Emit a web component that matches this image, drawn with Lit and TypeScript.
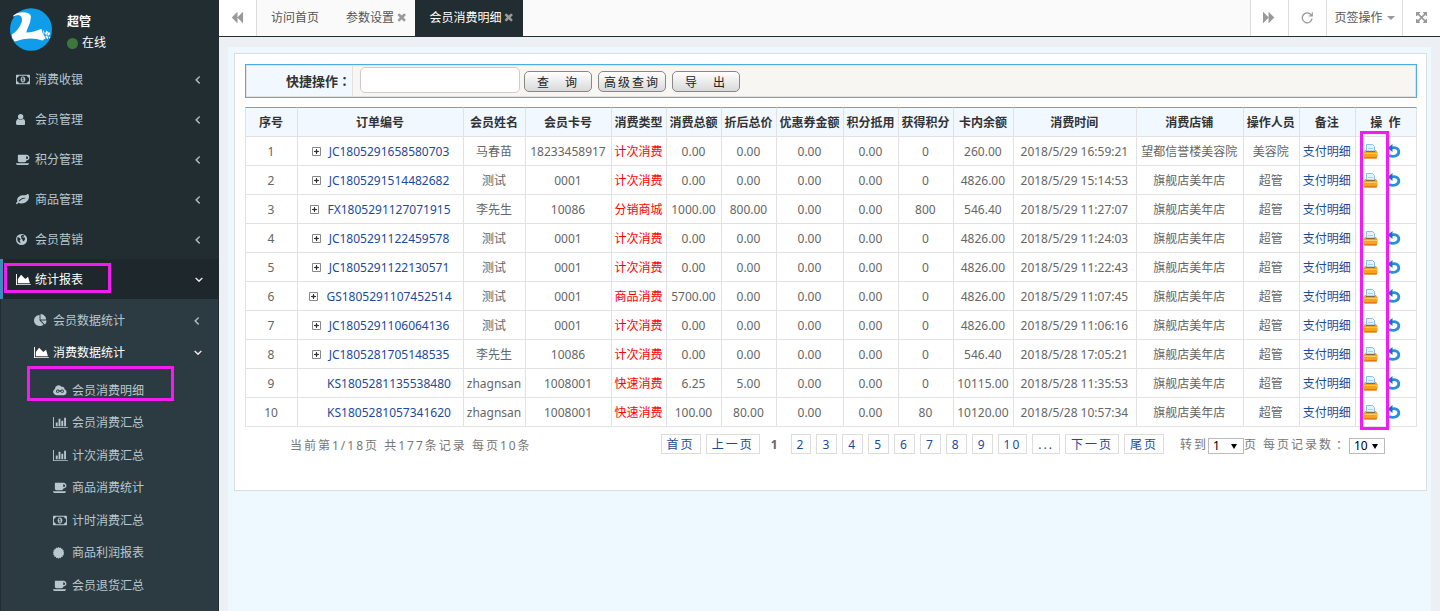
import { LitElement, html, css, svg, nothing } from "lit";
import { customElement, state } from "lit/decorators.js";
import { classMap } from "lit/directives/class-map.js";

type Glyph = { w: number; d: string };

const GLYPHS: Record<string, Glyph> = {
  money: { w: 1920, d: "M768 1152h384v-96h-128v-448h-114l-148 137 77 80q42-37 55-57h2v288h-128v96zm512-256q0 70-21 142t-59.5 134-101.5 101-138 39-138-39-101.5-101-59.5-134-21-142 21-142 59.5-134 101.5-101 138-39 138 39 101.5 101 59.5 134 21 142zm512 256v-512q-106 0-181-75t-75-181h-1152q0 106-75 181t-181 75v512q106 0 181 75t75 181h1152q0-106 75-181t181-75zm128-832v1152q0 26-19 45t-45 19h-1792q-26 0-45-19t-19-45v-1152q0-26 19-45t45-19h1792q26 0 45 19t19 45z" },
  user: { w: 1280, d: "M1280 1399q0 109-62.500 187t-150.500 78h-854q-88 0-150.500-78t-62.500-187q0-85 8.500-160.500t31.500-152 58.500-131 94-89 134.500-34.500q131 128 313 128t313-128q76 0 134.500 34.500t94 89 58.500 131 31.500 152 8.500 160.500zm-256-887q0 159-112.500 271.500t-271.500 112.500-271.500-112.500-112.500-271.500 112.500-271.500 271.500-112.500 271.500 112.500 112.500 271.500z" },
  coffee: { w: 1920, d: "M1664 640q0-80-56-136t-136-56h-64v384h64q80 0 136-56t56-136zm-1664 768h1792q0 106-75 181t-181 75h-1280q-106 0-181-75t-75-181zm1856-768q0 159-112.5 271.5t-271.5 112.5h-64v32q0 92-66 158t-158 66h-704q-92 0-158-66t-66-158v-736q0-26 19-45t45-19h1152q159 0 271.5 112.5t112.5 271.5z" },
  leaf: { w: 1792, d: "M1280 704q0-26-19-45t-45-19q-172 0-318 49.5t-259.5 134-235.5 219.5q-19 21-19 45 0 26 19 45t45 19q24 0 45-19 27-24 74-71t67-66q137-124 268.5-176t313.5-52q26 0 45-19t19-45zm512-198q0 95-20 193-46 224-184.5 383t-357.5 268q-214 108-438 108-148 0-286-47-15-5-88-42t-96-37q-16 0-39.5 32t-45 70-52.5 70-60 32q-43 0-63.5-17.5t-45.5-59.5q-2-4-6-11t-5.5-10-3-9.5-1.5-13.5q0-35 31-73.5t68-65.5 68-56 31-48q0-4-14-38t-16-44q-9-51-9-104 0-115 43.5-220t119-184.5 170.5-139 204-95.5q55-18 145-25.5t179.5-9 178.5-6 163.5-24 113.5-56.5l29.5-29.5 29.5-28 27-20 36.5-16 43.5-4.5q39 0 70.5 46t47.5 112 24 124 8 96z" },
  globe: { w: 1536, d: "M768 128a768 768 0 1 0 0 1536a768 768 0 1 0 0-1536zM800 270l180 20 150 90-60 130-130-40-90 90 110 60 190-20 90 130-20 210-170 190-130-60-30-190-160-110 20-170-90-70 60-120zM230 560l170 60 180 140 60 150-130 90 40 170 100 160-90 60-230-150-130-240-20-240z" },
  area: { w: 2048, d: "M2048 1536v128h-2048v-1536h128v1408h1920zm-384-1024l256 896h-1664v-576l448-576 576 576z" },
  bars: { w: 2048, d: "M640 896v512h-256v-512h256zm384-512v1024h-256v-1024h256zm1024 1152v128h-2048v-1536h128v1408h1920zm-640-896v768h-256v-768h256zm384-384v1152h-256v-1152h256z" },
  pie: { w: 1792, d: "M768 890l546 546q-106 108-247.5 168t-298.5 60q-209 0-385.5-103t-279.5-279.5-103-385.5 103-385.5 279.5-279.5 385.5-103v762zm187 6h773q0 157-60 298.5t-168 247.5zm709-128h-768v-768q209 0 385.5 103t279.5 279.5 103 385.5z" },
  cloud: { w: 1920, d: "M450 1536a450 450 0 0 1-190-850a510 510 0 0 1 920-290a290 290 0 0 1 400 320a420 420 0 0 1-100 820zM640 770a220 220 0 1 0 0 440c130 0 220-80 320-170c100 90 190 170 320 170a220 220 0 1 0 0-440c-130 0-220 80-320 170c-100-90-190-170-320-170zM640 890c70 0 120 40 190 100c-70 60-120 100-190 100a100 100 0 1 1 0-200zM1280 890a100 100 0 1 1 0 200c-70 0-120-40-190-100c70-60 120-100 190-100z" },
  certificate: { w: 1536, d: "M768 128l130 150 180-85 60 190 198-10-10 198 190 60-85 180 150 130-150 130 85 180-190 60 10 198-198-10-60 190-180-85-130 150-130-150-180 85-60-190-198 10 10-198-190-60 85-180-150-130 150-130-85-180 190-60-10-198 198 10 60-190 180 85z" },
  left: { w: 1024, d: "M627 544q0 13-10 23l-393 393 393 393q10 10 10 23t-10 23l-50 50q-10 10-23 10t-23-10l-466-466q-10-10-10-23t10-23l466-466q10-10 23-10t23 10l50 50q10 10 10 23z" },
  down: { w: 1152, d: "M1075 736q0 13-10 23l-466 466q-10 10-23 10t-23-10l-466-466q-10-10-10-23t10-23l50-50q10-10 23-10t23 10l393 393 393-393q10-10 23-10t23 10l50 50q10 10 10 23z" },
  times: { w: 1408, d: "M1298 1322q0 40-28 68l-136 136q-28 28-68 28t-68-28l-294-294-294 294q-28 28-68 28t-68-28l-136-136q-28-28-28-68t28-68l294-294-294-294q-28-28-28-68t28-68l136-136q28-28 68-28t68 28l294 294 294-294q28-28 68-28t68 28l136 136q28 28 28 68t-28 68l-294 294 294 294q28 28 28 68z" },
  backward: { w: 1664, d: "M1619 141q19-19 32-13t13 32v1472q0 26-13 32t-32-13l-710-710q-9-9-13-19v710q0 26-13 32t-32-13l-710-710q-19-19-19-45t19-45l710-710q19-19 32-13t13 32v710q4-10 13-19z" },
  forward: { w: 1664, d: "M45 1651q-19 19-32 13t-13-32v-1472q0-26 13-32t32 13l710 710q9 9 13 19v-710q0-26 13-32t32 13l710 710q19 19 19 45t-19 45l-710 710q-19 19-32 13t-13-32v-710q-4 10-13 19z" },
  repeat: { w: 1664, d: "M1640 160v600h-600v-150h300a590 590 0 1 0 100 440h180a770 770 0 1 1-140-570v-320z" },
  arrows: { w: 1536, d: "M1283 541l-355 355 355 355 144-144q29-31 70-14 39 17 39 59v448q0 26-19 45t-45 19h-448q-42 0-59-40-17-39 14-69l144-144-355-355-355 355 144 144q31 30 14 69-17 40-59 40h-448q-26 0-45-19t-19-45v-448q0-42 40-59 39-17 69 14l144 144 355-355-355-355-144 144q-19 19-45 19-12 0-24-5-40-17-40-59v-448q0-26 19-45t45-19h448q42 0 59 40 17 39-14 69l-144 144 355 355 355-355-144-144q-31-30-14-69 17-40 59-40h448q26 0 45 19t19 45v448q0 42-39 59-13 5-25 5-26 0-45-19z" },
};

const glyph = (name: string) => {
  const g = GLYPHS[name];
  return html`<svg class="glyph" viewBox="0 0 ${g.w} 1792" aria-hidden="true">
    ${svg`<path fill-rule="evenodd" d=${g.d}></path>`}
  </svg>`;
};

const logo = html`<svg class="logo" viewBox="0 0 126 128" role="img" aria-label="logo">
  <ellipse cx="63" cy="64" rx="63" ry="64" fill="#0f9dea"></ellipse>
  <path fill="#fff" d="M10 22Q20 12 38 12Q62 12 63 26Q62 42 55 56Q50 66 49 73Q72 73 94 62Q96 76 107 90L97 97Q60 84 14 100Q5 92 5 80Q26 66 35 42Q39 24 27 21Q18 20 10 26Z"></path>
  <path fill="#fff" d="M99 64l5 10-3 6zM110 66l4 6-5 9-4-4zM117 71l4 6-6 6-3-5zM106 84l5-3 4 8-3 4zM116 84l5 3-3 5z"></path>
</svg>`;

const printer = svg`<svg class="tool" viewBox="0 0 15 15" aria-hidden="true">
  <path d="M2 6h11l1.500 2.500v4l-1 2h-12l-1-2v-4z" fill="#f9a21f"></path>
  <path d="M3.500 .5h6l2 2v4.500h-8z" fill="#e4f2fd" stroke="#8cbfe8"></path>
  <path d="M5 4.500h5" stroke="#a9d0ee"></path>
  <path d="M3 7h9v1h-9z" fill="#8a6a3a"></path>
  <path d="M1 9h13v1h-13z" fill="#ffc95c"></path>
  <path d="M1 13h13l-.5 1.500h-12z" fill="#dd7a1c"></path>
</svg>`;

const undo = svg`<svg class="tool" viewBox="0 0 15 15" aria-hidden="true">
  <path d="M4 4C9 2.500 12 5 11.800 8.300C11.300 12 6.500 13.500 2 11.500" fill="none" stroke="#2a8edb" stroke-width="2.800"></path>
  <path d="M5.500 0v8L.4 4z" fill="#1d6fbf"></path>
</svg>`;

const plus = svg`<svg class="plus" viewBox="0 0 9 9" aria-hidden="true">
  <path d="M.5 .5h8v8h-8z" fill="#fff" stroke="#888"></path>
  <path d="M2 4.500h5M4.500 2v5" stroke="#333"></path>
  <path d="M3.500 3.500h2v2h-2z" fill="#333"></path>
</svg>`;

const MENU = [
  ["money", "消费收银"],
  ["user", "会员管理"],
  ["coffee", "积分管理"],
  ["leaf", "商品管理"],
  ["globe", "会员营销"],
];

const REPORTS = [
  ["cloud", "会员消费明细"],
  ["bars", "会员消费汇总"],
  ["bars", "计次消费汇总"],
  ["coffee", "商品消费统计"],
  ["money", "计时消费汇总"],
  ["certificate", "商品利润报表"],
  ["coffee", "会员退货汇总"],
];

const COLUMNS: [string, number][] = [
  ["序号", 53], ["订单编号", 166], ["会员姓名", 62], ["会员卡号", 86],
  ["消费类型", 55], ["消费总额", 55], ["折后总价", 55], ["优惠券金额", 67],
  ["积分抵用", 55], ["获得积分", 55], ["卡内余额", 60], ["消费时间", 123],
  ["消费店铺", 107], ["操作人员", 56], ["备注", 56], ["操\u00a0\u00a0作", 61],
];

// order no., member, card, type, total, discounted, points, balance, time, shop, operator
const ROWS: string[][] = [
  ["JC1805291658580703", "马春苗", "18233458917", "计次消费", "0.00", "0.00", "0", "260.00", "2018/5/29 16:59:21", "望都信誉楼美容院", "美容院"],
  ["JC1805291514482682", "测试", "0001", "计次消费", "0.00", "0.00", "0", "4826.00", "2018/5/29 15:14:53", "旗舰店美年店", "超管"],
  ["FX1805291127071915", "李先生", "10086", "分销商城", "1000.00", "800.00", "800", "546.40", "2018/5/29 11:27:07", "旗舰店美年店", "超管"],
  ["JC1805291122459578", "测试", "0001", "计次消费", "0.00", "0.00", "0", "4826.00", "2018/5/29 11:24:03", "旗舰店美年店", "超管"],
  ["JC1805291122130571", "测试", "0001", "计次消费", "0.00", "0.00", "0", "4826.00", "2018/5/29 11:22:43", "旗舰店美年店", "超管"],
  ["GS1805291107452514", "测试", "0001", "商品消费", "5700.00", "0.00", "0", "4826.00", "2018/5/29 11:07:45", "旗舰店美年店", "超管"],
  ["JC1805291106064136", "测试", "0001", "计次消费", "0.00", "0.00", "0", "4826.00", "2018/5/29 11:06:16", "旗舰店美年店", "超管"],
  ["JC1805281705148535", "李先生", "10086", "计次消费", "0.00", "0.00", "0", "546.40", "2018/5/28 17:05:21", "旗舰店美年店", "超管"],
  ["KS1805281135538480", "zhagnsan", "1008001", "快速消费", "6.25", "5.00", "0", "10115.00", "2018/5/28 11:35:53", "旗舰店美年店", "超管"],
  ["KS1805281057341620", "zhagnsan", "1008001", "快速消费", "100.00", "80.00", "80", "10120.00", "2018/5/28 10:57:34", "旗舰店美年店", "超管"],
];

const PAGES = ["首页", "上一页", "1", "2", "3", "4", "5", "6", "7", "8", "9", "10", "...", "下一页", "尾页"];

@customElement("app-root")
export class AppRoot extends LitElement {
  @state() private page = "1";

  static styles = css`
    :host {
      display: flex;
      min-height: 100vh;
      font: 12px/18px "Noto Sans", "Noto Sans CJK SC", sans-serif;
      color: #666;
      background: #ecf0f5;
    }
    * { box-sizing: border-box; }
    ul { list-style: none; margin: 0; padding: 0; }
    a { color: inherit; text-decoration: none; }
    button, input, select { font: inherit; margin: 0; }
    .glyph { display: block; height: 13px; fill: currentColor; }
    .colon { font-family: "Noto Sans CJK TC", sans-serif; }

    .sidebar {
      flex: none;
      width: 219px;
      background: #222d32;
      color: #b8c7ce;
    }
    .user { display: flex; gap: 15px; height: 59px; padding: 8px 10px; color: #fff; }
    .logo { width: 42px; height: 43px; }
    .who { display: flex; flex-direction: column; gap: 3px; padding-top: 5px; line-height: 18px; }
    .online { display: flex; align-items: center; gap: 4px; }
    .dot { width: 11px; height: 11px; border-radius: 50%; background: #3c763d; }

    .item { display: flex; align-items: center; padding-top: 2px; padding-right: 16px; }
    .item .ico { flex: none; width: 19px; margin-top: -2px; }
    .item .arrow { margin-left: auto; margin-top: -2px; }
    .arrow .glyph { width: 8px; stroke: currentColor; stroke-width: 70px; overflow: visible; }
    .top { height: 40px; border-left: 3px solid transparent; padding-left: 13px; }
    .open { color: #fff; }
    .top.open { background: #1e282c; border-left-color: #3c8dbc; }
    .tree { margin: 0 1px; padding: 5px 0 10px; background: #2c3b41; }
    .sub { height: 32px; padding-left: 33px; }
    .leaves { padding-top: 6px; }
    .leaves .sub { padding-left: 52px; }
    .leaves li:nth-child(even) { margin-bottom: 1px; }
    .marked { position: relative; }
    .mark { position: absolute; border: 3px solid #f31bf3; pointer-events: none; }
    .mark-top { left: 1px; top: 4px; width: 107px; height: 30px; }
    .mark-leaf { left: 26px; top: -8px; width: 147px; height: 35px; }
    .mark-print { right: 28px; top: 24px; bottom: -3px; width: 29px; }

    .main { flex: 1; min-width: 0; display: flex; flex-direction: column; }
    .tabs {
      display: flex;
      height: 37px;
      background: #fafafa;
      border-bottom: 1px solid #222d32;
      color: #555;
    }
    .tabs button {
      display: flex;
      align-items: center;
      justify-content: center;
      gap: 4px;
      padding: 0;
      border: 0;
      border-left: 1px solid #ddd;
      background: #fff;
      color: #555;
    }
    .tabs .square { width: 38px; padding-bottom: 2px; color: #999; }
    .tabs .first { border-left: 0; border-right: 1px solid #ddd; }
    .tabs .ops { width: 76px; }
    .caret { border: 4px solid transparent; border-top-color: #999; border-bottom: 0; }
    .tab { display: flex; align-items: center; gap: 3px; padding: 0 9px 0 14px; }
    .tab.plain { padding-right: 13px; }
    .tab .glyph { height: 12px; margin-bottom: 2px; color: #999; }
    .tab.current { background: #222d32; color: #fff; }
    .spacer { flex: 1; }

    .body { flex: 1; padding: 10px 9px 0; display: flex; }
    .frame { flex: 1; min-width: 0; padding: 6px 4px 0 6px; background: #edf8ff; }
    .panel { padding: 10px 9px 35px 10px; background: #fff; border: 1px solid #ddd; }

    .query {
      display: flex;
      align-items: stretch;
      height: 34px;
      margin-bottom: 9px;
      border: 1px solid #4fabe6;
      background: #f7f6f3;
    }
    .query label {
      width: 107px;
      padding-right: 1px;
      border: 1px solid #e2e2e2;
      background: #f1f8ff;
      color: #333;
      font-weight: bold;
      font-size: 13px;
      line-height: 30px;
      text-align: right;
    }
    .fields {
      flex: 1;
      display: flex;
      align-items: center;
      gap: 6px;
      padding-left: 7px;
      border: 1px solid #e2e2e2;
      border-left: 0;
    }
    .fields input {
      width: 160px;
      height: 26px;
      margin: 0 -2px 2px 0;
      padding: 0 6px;
      border: 1px solid #ccc;
      border-radius: 5px;
      background: #fff;
    }
    .fields button {
      width: 68px;
      height: 21px;
      padding: 2px 0 0;
      border: 1px solid #888;
      border-radius: 5px;
      background: linear-gradient(#fff, #d9d9d9);
      color: #222;
      line-height: 17px;
      letter-spacing: 2px;
      text-align: center;
      white-space: nowrap;
    }

    .list { position: relative; }
    table { width: 100%; table-layout: fixed; border-collapse: separate; border-spacing: 0; }
    th, td {
      height: 29px;
      padding: 2px 1px 0 0;
      border: 0 solid #e2e2e2;
      border-right-width: 1px;
      border-bottom-width: 1px;
      text-align: center;
      font-size: 12px;
      line-height: 18px;
      white-space: nowrap;
    }
    td:last-child { padding-top: 0; }
    th { height: 30px; border-top: 1px solid #4fabe6; background: #f1f8ff; color: #333; }
    th:first-child, td:first-child { border-left-width: 1px; }
    .link { color: #1c4a9c; }
    .type { color: #f00; }
    .order { display: flex; align-items: center; justify-content: center; gap: 8px; padding-left: 1px; }
    .fold { flex: none; width: 9px; height: 9px; margin-bottom: 2px; padding: 0; border: 0; background: none; display: block; }
    .plus { display: block; width: 9px; height: 9px; }
    .acts { display: flex; gap: 9px; padding-left: 7px; }
    .acts button { padding: 0; border: 0; background: none; }
    .tool { display: block; width: 15px; height: 15px; }

    .pager {
      display: flex;
      flex-wrap: wrap;
      align-items: center;
      justify-content: space-between;
      padding: 6px 32px 0 45px;
      color: #777;
      letter-spacing: 2px;
    }
    .total { padding-top: 4px; }
    .right, .pages, .jump { display: flex; align-items: center; }
    .right { gap: 16px; }
    .pages { gap: 5px; }
    .pages a { padding: 2px 5px 0; border: 1px solid #ddd; color: #1c4a9c; line-height: 16px; }
    .pages a.on { border-color: transparent; color: #666; font-weight: bold; }
    .jump { padding-top: 2px; }
    .jump label { display: flex; align-items: center; }
    .jump label + label { margin-left: 5px; }
    .jump label + label .pick { margin-left: 2px; }
    .pick { position: relative; display: flex; letter-spacing: 0; margin-top: 2px; }
    .pick select {
      appearance: none;
      width: 36px;
      height: 16px;
      padding: 0 0 0 4px;
      border: 1px solid #bbb;
      border-radius: 0;
      background: #fff;
      color: #000;
      line-height: 14px;
    }
    .pick i {
      position: absolute;
      right: 7px;
      top: 6px;
      border: 3px solid transparent;
      border-top: 5px solid #000;
      border-bottom: 0;
      pointer-events: none;
    }
  `;

  private menuItem(icon: string, text: string, kind: string, arrow = "", open = false, mark = "") {
    return html`<a href="#" class=${classMap({ item: true, [kind]: true, open, marked: !!mark })}>
      <span class="ico">${glyph(icon)}</span>${text}
      ${arrow ? html`<span class="arrow">${glyph(arrow)}</span>` : nothing}
      ${mark ? html`<span class="mark ${mark}"></span>` : nothing}
    </a>`;
  }

  private row(r: string[], i: number) {
    const [no, member, card, type, total, paid, points, balance, time, shop, operator] = r;
    return html`<tr>
      <td>${i + 1}</td>
      <td><div class="order">
        ${no.startsWith("KS") ? html`<span class="fold"></span>` : html`<button class="fold" aria-label="展开">${plus}</button>`}
        <a class="link" href="#">${no}</a>
      </div></td>
      <td>${member}</td>
      <td>${card}</td>
      <td class="type">${type}</td>
      <td>${total}</td>
      <td>${paid}</td>
      <td>0.00</td>
      <td>0.00</td>
      <td>${points}</td>
      <td>${balance}</td>
      <td>${time}</td>
      <td>${shop}</td>
      <td>${operator}</td>
      <td><a class="link" href="#">支付明细</a></td>
      <td>${no.startsWith("FX") ? nothing : html`<div class="acts">
        <button aria-label="打印">${printer}</button>
        <button aria-label="撤销">${undo}</button>
      </div>`}</td>
    </tr>`;
  }

  render() {
    const sum = COLUMNS.reduce((a, c) => a + c[1], 0);
    return html`
      <nav class="sidebar">
        <div class="user">
          ${logo}
          <div class="who"><b>超管</b><span class="online"><i class="dot"></i>在线</span></div>
        </div>
        <ul>
          ${MENU.map(([i, t]) => html`<li>${this.menuItem(i, t, "top", "left")}</li>`)}
          <li>
            ${this.menuItem("area", "统计报表", "top", "down", true, "mark-top")}
            <ul class="tree">
              <li>${this.menuItem("pie", "会员数据统计", "sub", "left")}</li>
              <li>
                ${this.menuItem("area", "消费数据统计", "sub", "down", true)}
                <ul class="leaves">
                  ${REPORTS.map(([i, t], n) => html`<li>${this.menuItem(i, t, "sub", "", false, n ? "" : "mark-leaf")}</li>`)}
                </ul>
              </li>
            </ul>
          </li>
        </ul>
      </nav>
      <div class="main">
        <header class="tabs">
          <button class="square first" aria-label="向左">${glyph("backward")}</button>
          <a class="tab plain" href="#">访问首页</a>
          <a class="tab" href="#">参数设置 ${glyph("times")}</a>
          <a class="tab current" href="#">会员消费明细 ${glyph("times")}</a>
          <span class="spacer"></span>
          <button class="square" aria-label="向右">${glyph("forward")}</button>
          <button class="square" aria-label="刷新">${glyph("repeat")}</button>
          <button class="ops">页签操作<i class="caret"></i></button>
          <button class="square" aria-label="全屏">${glyph("arrows")}</button>
        </header>
        <div class="body">
          <div class="frame">
            <section class="panel">
              <div class="query">
                <label for="q">快捷操作<span class="colon">：</span></label>
                <div class="fields">
                  <input id="q" type="text" />
                  <button>查　询</button>
                  <button>高级查询</button>
                  <button>导　出</button>
                </div>
              </div>
              <div class="list">
                <table>
                  <colgroup>
                    ${COLUMNS.map(([, w]) => html`<col style="width:${(w / sum) * 100}%" />`)}
                  </colgroup>
                  <thead><tr>${COLUMNS.map(([t]) => html`<th>${t}</th>`)}</tr></thead>
                  <tbody>${ROWS.map((r, i) => this.row(r, i))}</tbody>
                </table>
                <span class="mark mark-print"></span>
              </div>
              <div class="pager">
                <span class="total">当前第1/18页 共177条记录 每页10条</span>
                <div class="right">
                  <div class="pages">
                    ${PAGES.map((p) => html`<a href="#" class=${classMap({ on: p === this.page })}>${p}</a>`)}
                  </div>
                  <div class="jump">
                    <label>转到<span class="pick"><select><option>1</option></select><i></i></span>页</label>
                    <label>每页记录数<span class="colon">：</span><span class="pick"><select><option>10</option></select><i></i></span></label>
                  </div>
                </div>
              </div>
            </section>
          </div>
        </div>
      </div>
    `;
  }
}
